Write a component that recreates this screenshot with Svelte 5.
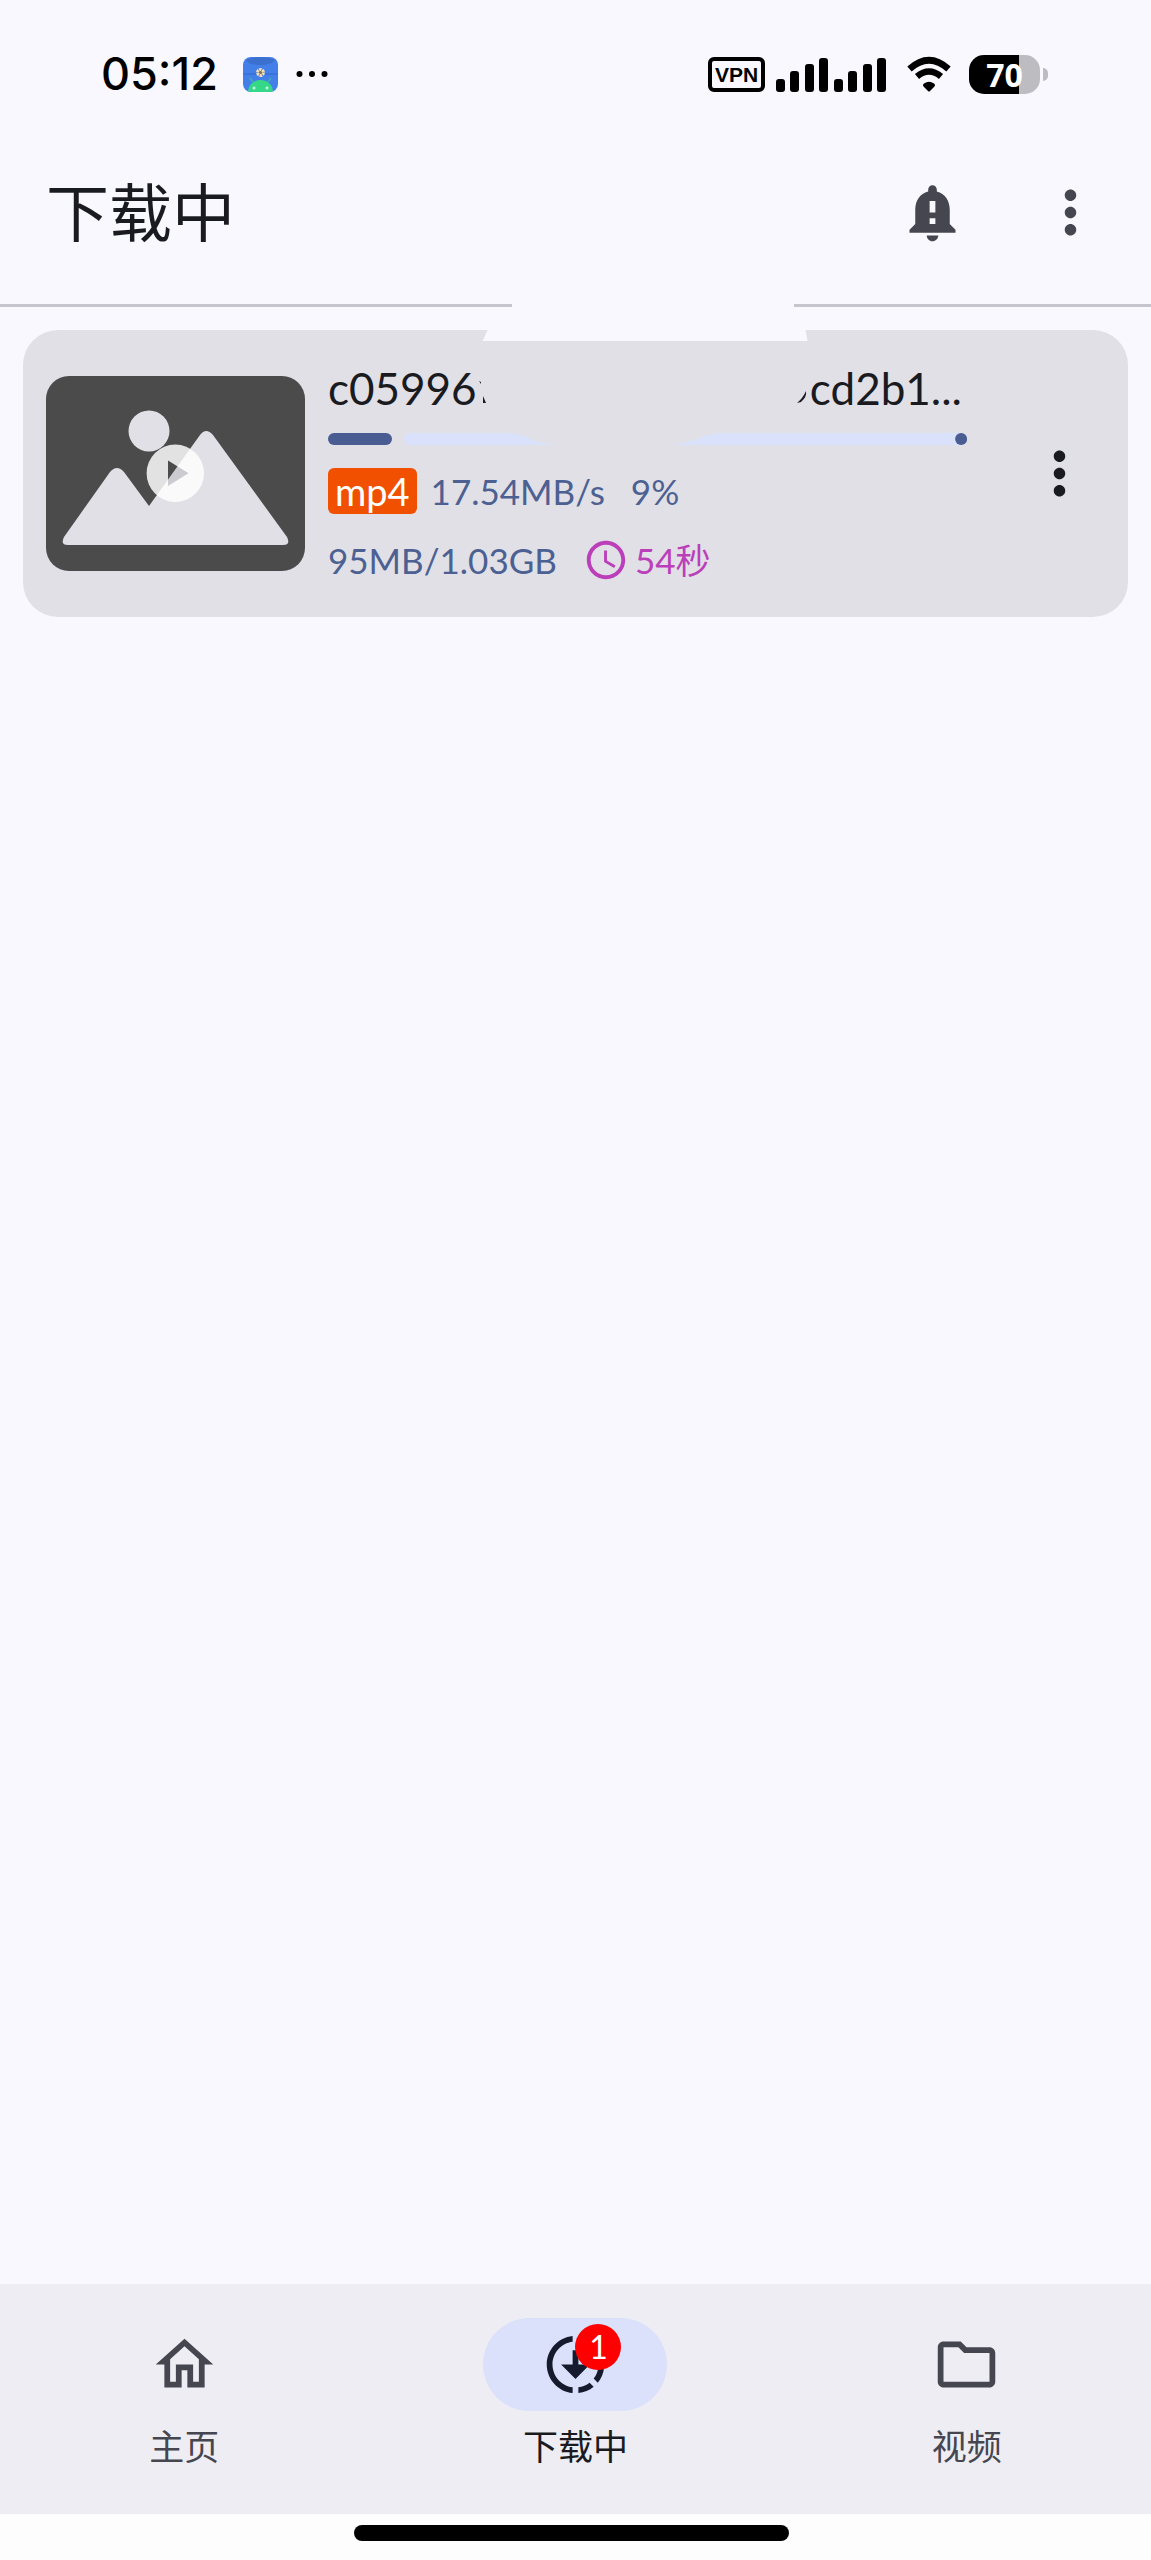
<script>
	const signalBars = [13, 21, 28, 34];

	const icons = {
		alert:
			'M18 16v-5c0-3.07-1.64-5.64-4.5-6.32V4c0-.83-.67-1.5-1.5-1.5s-1.5.67-1.5 1.5v.68C7.63 5.36 6 7.92 6 11v5l-2 2v1h16v-1l-2-2zm-5 0h-2v-2h2v2zm0-4h-2V8h2v4zm-1 10c1.1 0 2-.9 2-2h-4c0 1.1.89 2 2 2z',
		more: 'M12 8c1.1 0 2-.9 2-2s-.9-2-2-2-2 .9-2 2 .9 2 2 2zm0 2c-1.1 0-2 .9-2 2s.9 2 2 2 2-.9 2-2-.9-2-2-2zm0 6c-1.1 0-2 .9-2 2s.9 2 2 2 2-.9 2-2-.9-2-2-2z',
		clock:
			'M12 2C6.5 2 2 6.5 2 12s4.5 10 10 10 10-4.500 10-10S17.500 2 12 2zm0 18c-4.400 0-8-3.600-8-8s3.600-8 8-8 8 3.600 8 8-3.600 8-8 8zm.5-13H11v6l5.200 3.200.8-1.300-4.500-2.700V7z',
		home: 'M12 5.69l5 4.5V18h-2v-6H9v6H7v-7.81l5-4.5M12 3L2 12h3v8h6v-6h2v6h6v-8h3L12 3z',
		downloading:
			'M18.32 4.26C16.84 3.05 15.01 2.25 13 2.05v2.02c1.46.18 2.79.76 3.9 1.62l1.42-1.43zM19.93 11h2.02c-.2-2.01-1-3.84-2.21-5.32L18.31 7.1c.86 1.11 1.44 2.44 1.62 3.9zM18.31 16.9l1.43 1.43c1.21-1.48 2.01-3.32 2.21-5.32h-2.02c-.18 1.45-.76 2.78-1.62 3.89zM13 19.93v2.02c2.01-.2 3.84-1 5.32-2.21l-1.43-1.43c-1.1.86-2.43 1.44-3.89 1.62zM13 12V7h-2v5H7l5 5 5-5h-4zM11 19.93v2.02c-5.05-.5-9-4.76-9-9.95s3.95-9.45 9-9.95v2.02C7.05 4.56 4 7.92 4 12s3.05 7.44 7 7.93z',
		folder:
			'M9.17 6l2 2H20v10H4V6h5.17M10 4H4c-1.1 0-1.99.9-1.99 2L2 18c0 1.1.9 2 2 2h16c1.1 0 2-.9 2-2V8c0-1.1-.9-2-2-2h-8l-2-2z'
	};

	const tabs = [
		{ id: 'home', label: '主页', icon: icons.home },
		{ id: 'downloading', label: '下载中', icon: icons.downloading, badge: 1 },
		{ id: 'videos', label: '视频', icon: icons.folder }
	];

	let active = $state('downloading');

	const task = {
		start: 'c05996',
		end: 'cd2b1...',
		type: 'mp4',
		speed: '17.54MB/s',
		percent: 9,
		size: '95MB/1.03GB',
		left: '54秒'
	};
</script>

{#snippet icon(d)}
	<svg class="icon" viewBox="0 0 24 24" aria-hidden="true"><path {d} /></svg>
{/snippet}

<div class="app">
	<div class="status">
		<span class="time">05:12</span>
		<svg class="app-icon" viewBox="0 0 35 35" aria-hidden="true">
			<rect width="35" height="35" rx="8" fill="#437fe8" />
			<path d="M3 3Q8 0 17 0T32 3Q29 8 17.5 8T3 3z" fill="#3b70cf" />
			<path d="M0 17h35" stroke="#356bc9" />
			<path d="M5 34c1-7 6-11 12.5-11S29 27 30 34q-2 1-4 1H9q-2 0-4-1z" fill="#34d886" />
			<path d="M10 25l-3-4M25 25l3-4" stroke="#3fa9b8" stroke-width="2" />
			<circle cx="17.5" cy="15.5" r="3" fill="#7b715e" stroke="#f0dfb4" stroke-width="3" stroke-dasharray="2.4 .7" />
			<circle cx="11" cy="31" r="1.5" fill="#c8ffe0" />
			<circle cx="24" cy="31" r="1.5" fill="#c8ffe0" />
		</svg>
		<svg class="dots" viewBox="0 0 32 8" aria-hidden="true">
			<circle cx="3.5" cy="4" r="3" /><circle cx="16" cy="4" r="3" /><circle cx="28.5" cy="4" r="3" />
		</svg>
		<span class="vpn">VPN</span>
		<div class="signal">
			{#each [...signalBars, ...signalBars] as height}
				<i style="height: {height}px"></i>
			{/each}
		</div>
		<svg class="wifi" viewBox="0 0 46 36" aria-hidden="true">
			<path d="M3.5 13Q23-4.5 42.5 13" stroke-width="6.5" />
			<path d="M11 20.5Q23 10.5 35 20.5" stroke-width="6.5" />
			<path class="tip" d="M18 27.5q5-3.5 10 0 2 1.5 0 3.5l-4 4q-1 1-2 0l-4-4q-2-2 0-3.5z" />
		</svg>
		<div class="battery"><span>70</span></div>
	</div>

	<header>
		<h1>下载中</h1>
		<button aria-label="通知">{@render icon(icons.alert)}</button>
		<button aria-label="更多">{@render icon(icons.more)}</button>
	</header>
	<div class="divider"></div>

	<main>
		<article class="card">
			<svg class="thumb" viewBox="0 0 259 195" aria-hidden="true">
				<rect width="259" height="195" rx="23" fill="#4b4b4b" />
				<circle cx="103" cy="55" r="20.5" fill="#e1e0e6" />
				<path
					d="M18 161L64 96q7-8 14 0l25 34 51-71q6-8 13 0l74 102q4 8-4 8H22q-8 0-4-8z"
					fill="#e1e0e6"
				/>
				<path
					d="M129.3 68.6a28.7 28.7 0 1 0 0 57.4a28.7 28.7 0 1 0 0-57.4zM122 84.5l20.5 12.8L122 110z"
					fill="#fff"
					fill-opacity=".84"
					fill-rule="evenodd"
				/>
				<path d="M122 84.5l20.5 12.8L122 110z" fill="#4b4b4b" fill-opacity=".14" />
			</svg>
			<div class="info">
				<div class="name">
					<span>{task.start}</span>
					<svg class="trace" viewBox="0 0 10 30" aria-hidden="true">
						<path d="M2 8l2 1v2zM6 23l3 7H6z" />
					</svg>
					<svg class="trace right" viewBox="0 0 10 30" aria-hidden="true">
						<path d="M9 18q1 6-5 11l-4 1q6-5 9-12z" />
					</svg>
					<span>{task.end}</span>
				</div>
				<div class="progress" role="progressbar" aria-label="下载进度" aria-valuenow={task.percent}>
					<div class="fill" style="width: {task.percent + 1}%"></div>
					<svg class="track" viewBox="0 0 563 12" preserveAspectRatio="none">
						<path d="M6 0H107Q118 1 127 6T156 12H6A6 6 0 0 1 6 0z" />
						<path d="M268 12Q289 8 298 4T317 0H557V12z" />
						<circle cx="557" cy="6" r="6" />
					</svg>
				</div>
				<div class="row">
					<span class="type">{task.type}</span>
					<span class="speed">{task.speed}</span>
					<span>{task.percent}%</span>
				</div>
				<div class="row">
					<span>{task.size}</span>
					<span class="left">{@render icon(icons.clock)}{task.left}</span>
				</div>
			</div>
			<button aria-label="任务菜单">{@render icon(icons.more)}</button>
		</article>
	</main>

	<nav>
		{#each tabs as tab}
			<button class="tab" class:active={active === tab.id} onclick={() => (active = tab.id)}>
				<span class="pill">
					{@render icon(tab.icon)}
					{#if tab.badge}<span class="badge">{tab.badge}</span>{/if}
				</span>
				<span>{tab.label}</span>
			</button>
		{/each}
	</nav>
	<div class="gesture"><div></div></div>
</div>

<style>
	:global(body) {
		background: #f9f8ff;
	}

	.app {
		display: flex;
		flex-direction: column;
		min-height: 100vh;
		color: #1a1b21;
		font-family: Lato, 'Noto Sans CJK SC', sans-serif;
	}

	button {
		display: flex;
		align-items: center;
		justify-content: center;
		flex: none;
		width: 138px;
		height: 138px;
		padding: 0;
		border: 0;
		background: none;
		color: inherit;
		font: inherit;
		cursor: pointer;
	}

	.icon {
		display: block;
		width: 69px;
		height: 69px;
		fill: currentColor;
	}

	/* status bar */
	.status {
		display: flex;
		align-items: center;
		box-sizing: border-box;
		height: 120px;
		padding: 28px 103px 0 101px;
		color: #000;
	}

	.time {
		width: 120px;
		font-family: Inter, sans-serif;
		font-size: 45px;
		font-weight: 500;
		line-height: 48px;
		white-space: nowrap;
	}

	.app-icon {
		width: 35px;
		height: 35px;
		margin-left: 22px;
	}

	.dots {
		width: 32px;
		height: 8px;
		margin: 0 auto 0 18px;
	}

	.vpn {
		box-sizing: border-box;
		width: 57px;
		height: 35px;
		border: 4px solid #000;
		border-radius: 6px;
		font: 700 21px/27px 'Liberation Sans', sans-serif;
		text-align: center;
	}

	.signal {
		display: flex;
		align-items: flex-end;
		justify-content: space-between;
		width: 110px;
		height: 35px;
		margin-left: 11px;
	}

	.signal i {
		width: 9px;
		border-radius: 3px;
		background: #000;
	}

	.wifi {
		width: 46px;
		height: 36px;
		margin: 0 17px 0 20px;
		fill: none;
		stroke: #000;
	}

	.wifi .tip {
		fill: #000;
		stroke: none;
	}

	.battery {
		position: relative;
		width: 71px;
		height: 39px;
		margin-right: 8px;
		border-radius: 15px;
		background: linear-gradient(90deg, #000 70%, #bdbdc1 70%);
		color: #fff;
		font: 700 32px/39px 'Open Sans', sans-serif;
		text-align: center;
	}

	.battery::after {
		content: '';
		position: absolute;
		top: 13px;
		right: -8px;
		width: 5px;
		height: 13px;
		border-radius: 0 6px 6px 0;
		background: #bdbdc1;
	}

	/* app bar */
	header {
		display: flex;
		align-items: center;
		height: 184px;
		padding: 0 12px 0 46px;
	}

	header button {
		color: #45464f;
	}

	h1 {
		flex: 1;
		margin: 0;
		font-size: 63px;
		font-weight: 400;
		line-height: 80px;
	}

	.divider {
		position: relative;
		height: 3px;
		background: #c6c5cd;
	}

	.divider::after {
		content: '';
		position: absolute;
		inset: 0 31% 0 44.5%;
		background: #f9f8ff;
	}

	/* download list */
	main {
		flex: 1;
		padding: 23px;
	}

	.card {
		position: relative;
		display: flex;
		align-items: center;
		gap: 23px;
		padding: 29px 0 29px 23px;
		border-radius: 35px;
		background: #e1e0e6;
	}

	.card::before {
		content: '';
		position: absolute;
		top: 0;
		left: 41.6%;
		width: 29.4%;
		height: 11px;
		background: #f9f8ff;
		clip-path: polygon(5px 0, calc(100% - 2px) 0, 100% 100%, 0 100%);
	}

	.thumb {
		flex: none;
		width: 259px;
		height: 195px;
	}

	.info {
		flex: 1;
		min-width: 0;
		padding-bottom: 5px;
	}

	.name {
		display: flex;
		align-items: center;
		padding-right: 5px;
		font-size: 44px;
		line-height: 58px;
	}

	.trace {
		width: 10px;
		height: 30px;
		fill: #1a1b21;
	}

	.trace.right {
		margin-left: auto;
		margin-right: 3px;
	}

	.progress {
		display: flex;
		gap: 12px;
		height: 12px;
		margin: 16px 0 23px;
	}

	.fill {
		flex: none;
		border-radius: 6px;
		background: #495d92;
	}

	.track {
		flex: 1;
		min-width: 0;
		height: 12px;
		fill: #dae1fb;
	}

	.track circle {
		fill: #495d92;
	}

	.row {
		display: flex;
		align-items: center;
		gap: 26px;
		color: #4c6092;
		font-size: 35px;
		line-height: 46px;
	}

	.row + .row {
		margin-top: 23px;
	}

	.type {
		padding: 0 7px;
		border-radius: 6px;
		background: #f15000;
		color: #fff;
		font-size: 38px;
	}

	.speed {
		margin-left: -12px;
	}

	.left {
		display: flex;
		gap: 6px;
		color: #bb3fb9;
	}

	.left .icon {
		width: 46px;
		height: 46px;
	}

	/* bottom tabs */
	nav {
		display: flex;
		gap: 23px;
		padding: 34px 0 45px;
		background: #eeedf3;
	}

	.tab {
		flex: 1;
		flex-direction: column;
		gap: 12px;
		width: auto;
		height: auto;
		color: #45464f;
		font-size: 35px;
		line-height: 46px;
	}

	.pill {
		position: relative;
		display: flex;
		align-items: center;
		justify-content: center;
		width: 184px;
		height: 93px;
		border-radius: 47px;
	}

	.active {
		color: #1a1b21;
	}

	.active .pill {
		background: #dbe1fa;
		color: #151b2c;
	}

	.badge {
		position: absolute;
		top: 6px;
		left: 50%;
		width: 46px;
		height: 46px;
		border-radius: 50%;
		background: #fe0000;
		color: #fff;
		font-size: 32px;
		line-height: 46px;
	}

	.gesture {
		display: flex;
		justify-content: center;
		height: 35px;
		padding: 11px 8px 0 0;
		background: #fdfdfd;
	}

	.gesture div {
		width: 38%;
		height: 16px;
		border-radius: 8px;
		background: #000;
	}
</style>
